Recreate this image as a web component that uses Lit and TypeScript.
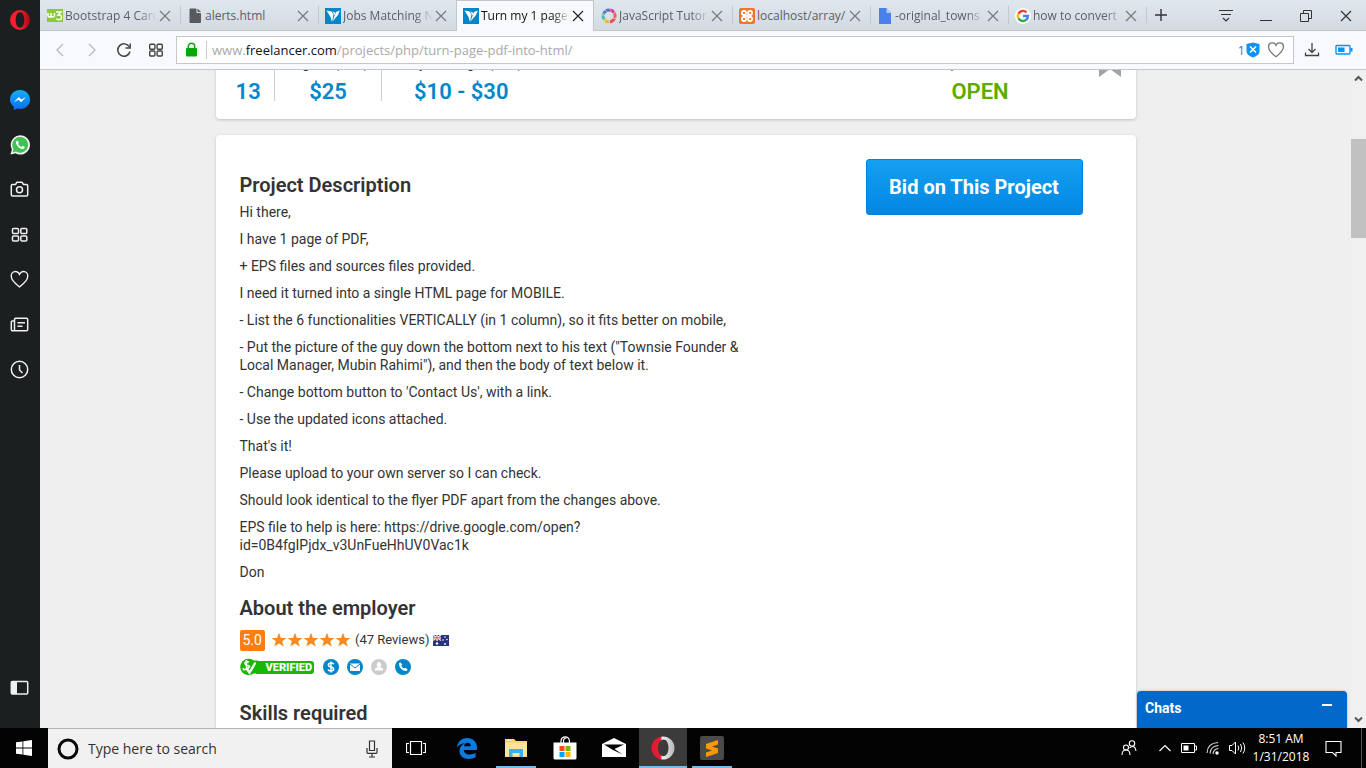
import { LitElement, html, css, svg } from "lit";
import { customElement } from "lit/decorators.js";
import { classMap } from "lit/directives/class-map.js";

const svgIcon = (w: number, h: number, body: unknown) =>
  html`<svg width=${w} height=${h} viewBox="0 0 ${w} ${h}" aria-hidden="true">${body}</svg>`;

const w3 = svgIcon(16, 16, svg`<rect y="1" width="16" height="13" fill="#8bc83c"/><path d="M1 5v2.500q0 1.500 1.500 1.500T4 7.500V5v2.500q0 1.500 1.500 1.500T7.500 7.500V5M9 4h5l-2.800 3q3.300-.2 3.300 2.300t-2.600 2.500q-2 0-2.700-1.300" fill="none" stroke="#fff" stroke-width="1.500"/>`);
const fileGrey = svgIcon(16, 16, svg`<path d="M3 1h6v4.500h4.500V14.500H3z" fill="#585b5e" stroke="#585b5e" stroke-linejoin="round"/><path d="M10.500.5v3.500H14z" fill="#585b5e"/>`);
const bird = svgIcon(16, 16, svg`<rect width="16" height="16" fill="#0087cb"/><path d="M1.500 2.500 6.500 3.500 8.500 6.500 7 14 5.500 9z" fill="#fff"/><path d="M7.500 3.300 10.500 5 9.300 7.500z" fill="#fff"/><path d="M11 4 14.800 2.500 13 7 7.500 13.500 9.500 8z" fill="#fff"/>`);
const swirl = svgIcon(16, 16, svg`<g fill="none" stroke-width="3"><path d="M8 2a6 6 0 0 1 5 2.600" stroke="#c6398f"/><path d="M13 4.600a6 6 0 0 1 .5 5.800" stroke="#f0655a"/><path d="M13.500 10.400a6 6 0 0 1-5 3.500" stroke="#e8505b"/><path d="M8.500 14a6 6 0 0 1-5.500-3" stroke="#e9b93c"/><path d="M3 11a6 6 0 0 1 0-6" stroke="#3cc3b5"/><path d="M3 5a6 6 0 0 1 5-3" stroke="#5b6fc4"/></g><g stroke="#fff" stroke-width=".5" fill="none"><path d="M8 .5q2 1 2.500 3.500M14 3q0 2-2.500 3M15.500 10q-2 1-4 0M9 16q-1.500-2-.5-4M3 14q0-2 2-3M.5 7q1.500-1 4 1M3 2q2 0 3 2"/></g>`);
const xampp = svgIcon(16, 16, svg`<rect width="16" height="16" rx="2" fill="#ee7724"/><g fill="none" stroke="#fff" stroke-width="1.800"><rect x="3" y="3" width="4" height="4" rx="1.700"/><rect x="9" y="3" width="4" height="4" rx="1.700"/><rect x="3" y="9" width="4" height="4" rx="1.700"/><rect x="9" y="9" width="4" height="4" rx="1.700"/><path d="M6 8h4"/></g>`);
const docBlue = svgIcon(16, 16, svg`<path d="M2 0h7.500L14 5v11H2z" fill="#4a80ea"/><path d="M9.500 0 14 5H9.500z" fill="#b4cbf6"/>`);
const google = svgIcon(16, 16, svg`<circle cx="8" cy="8" r="8" fill="#fff"/><g fill="none" stroke-width="2.400"><path d="M3.500 5.600a5 5 0 0 1 8-1.200" stroke="#ea4335"/><path d="M3.500 10.400a5 5 0 0 1 0-4.800" stroke="#fbbc05"/><path d="M11.300 11.700a5 5 0 0 1-7.800-1.300" stroke="#34a853"/><path d="M8 8h5q0 2.300-1.700 3.700" stroke="#4285f4"/></g>`);
const cross = svgIcon(12, 12, svg`<path d="M1 1l10 10M11 1 1 11" stroke="currentColor" stroke-width="1.200" fill="none"/>`);

const gridIcon = svgIcon(16, 16, svg`<g fill="none" stroke="currentColor" stroke-width="1.400"><rect x="1.700" y="2.200" width="5.200" height="5" rx="1"/><rect x="9.100" y="2.200" width="5.200" height="5" rx="1"/><rect x="1.700" y="9" width="5.200" height="5" rx="1"/><rect x="9.100" y="9" width="5.200" height="5" rx="1"/></g>`);
const heartPath = svg`<path d="M10 17.500C4 12.800 1.800 10.300 1.800 7A4.200 4.200 0 0 1 10 5.200 4.200 4.200 0 0 1 18.200 7c0 3.300-2.200 5.800-8.200 10.500z" fill="none" stroke="currentColor" stroke-width="1.400" stroke-linejoin="round"/>`;
const operaMark = svgIcon(20, 20, svg`<defs><linearGradient id="og" x2="1" y2="0"><stop offset="0" stop-color="#ff1b2d"/><stop offset=".5" stop-color="#fa1e2e"/><stop offset="1" stop-color="#a80716"/></linearGradient></defs><path fill-rule="evenodd" d="M10 0a10 10 0 1 0 0 20 10 10 0 0 0 0-20zm0 2.300c2.700 0 4.300 3.400 4.300 7.700S12.700 17.700 10 17.700 5.700 14.300 5.700 10 7.300 2.300 10 2.300z" fill="url(#og)"/>`);

const sideItems = [
  { name: "Messenger", icon: svgIcon(20, 20, svg`<defs><linearGradient id="mg" x2="0" y2="1"><stop offset="0" stop-color="#12b0f8"/><stop offset="1" stop-color="#0a6cf5"/></linearGradient></defs><path d="M10 0C4.400 0 0 4.200 0 9.500c0 3 1.500 5.500 3.800 7.200V20l3.500-1.400c.9.200 1.800.4 2.700.4 5.600 0 10-4.200 10-9.500S15.600 0 10 0z" fill="url(#mg)"/><path d="M3.800 12.200 8.800 7l2.600 2.500L16 7l-4.900 5.200L8.500 9.700z" fill="#fff"/>`) },
  { name: "WhatsApp", icon: svgIcon(20, 20, svg`<path d="M.5 19.500 1.900 14.500A9.600 9.600 0 1 1 5.500 18.200z" fill="#f4f4f4"/><path d="M2.500 17.500l1-3.500A7.900 7.900 0 1 1 6 16.500z" fill="#3fc154"/><path d="M7.300 5.500c-1.300.4-1.700 1.900-1 3.400 1.200 2.700 3.200 4.500 5.800 5.100 1.300.3 2.600-.6 2.700-2l-2.200-1.200-1.100 1.200c-1.600-.7-2.700-1.700-3.400-3l.8-1.200z" fill="#fff"/>`) },
  { name: "Snapshot", icon: svgIcon(20, 20, svg`<g fill="none" stroke="currentColor" stroke-width="1.500" stroke-linejoin="round"><path d="M2.500 4.500h3L7 2.200h5l1.500 2.300h3q1.200 0 1.200 1.200v9q0 1.200-1.200 1.200h-14q-1.200 0-1.200-1.200v-9Q1.300 4.500 2.500 4.500z"/><circle cx="9.500" cy="9.800" r="3"/></g>`) },
  { name: "Speed Dial", icon: svgIcon(20, 20, svg`<g fill="none" stroke="currentColor" stroke-width="1.500"><rect x="2.500" y="3.500" width="6" height="5" rx="1"/><rect x="10.800" y="3.500" width="6" height="5" rx="1"/><rect x="2.500" y="11" width="6" height="5" rx="1"/><rect x="10.800" y="11" width="6" height="5" rx="1"/></g>`) },
  { name: "Bookmarks", icon: svgIcon(20, 20, svg`<g transform="translate(-.5 -.5)">${heartPath}</g>`) },
  { name: "News", icon: svgIcon(20, 20, svg`<g transform="translate(-.5 -.5)" fill="none" stroke="currentColor" stroke-width="1.500" stroke-linejoin="round"><path d="M5 16.300V5q0-1.200 1.200-1.200H17q1.200 0 1.200 1.200v10q0 1.300-1.200 1.300H3.200q-1.400 0-1.400-1.300V7.500q0-1 1-1H5M8 8.200h7.500M8 11.800h5"/></g>`) },
  { name: "History", icon: svgIcon(20, 20, svg`<g transform="translate(-.5 -.5)" fill="none" stroke="currentColor" stroke-width="1.500"><circle cx="10" cy="10" r="8.200"/><path d="M10 5.500v5l3 3"/></g>`) },
];
const panelIcon = svgIcon(20, 20, svg`<g transform="translate(-.5 -.5)"><rect x="1.800" y="4" width="16.400" height="12.500" rx="1" fill="none" stroke="currentColor" stroke-width="1.500"/><path d="M2 4h5.500v12.500H2z" fill="currentColor"/></g>`);

const tabs = [
  { title: "Bootstrap 4 Card", icon: w3 },
  { title: "alerts.html", icon: fileGrey },
  { title: "Jobs Matching N", icon: bird },
  { title: "Turn my 1 page", icon: bird, active: true },
  { title: "JavaScript Tutor", icon: swirl },
  { title: "localhost/array/", icon: xampp },
  { title: "-original_towns", icon: docBlue },
  { title: "how to convert", icon: google },
];

const description = [
  "Hi there,",
  "I have 1 page of PDF,",
  "+ EPS files and sources files provided.",
  "I need it turned into a single HTML page for MOBILE.",
  "- List the 6 functionalities VERTICALLY (in 1 column), so it fits better on mobile,",
  "- Put the picture of the guy down the bottom next to his text (\"Townsie Founder & Local Manager, Mubin Rahimi\"), and then the body of text below it.",
  "- Change bottom button to 'Contact Us', with a link.",
  "- Use the updated icons attached.",
  "That's it!",
  "Please upload to your own server so I can check.",
  "Should look identical to the flyer PDF apart from the changes above.",
  "EPS file to help is here: https://drive.google.com/open?id=0B4fgIPjdx_v3UnFueHhUV0Vac1k",
  "Don",
];

@customElement("side-bar")
class SideBar extends LitElement {
  static styles = css`
    :host { display: flex; flex-direction: column; align-items: center; background: #1b1f20; padding: 10px 0 30px; box-sizing: border-box; }
    button { all: unset; display: flex; justify-content: center; width: 40px; height: 20px; color: #f0f0f0; }
    svg { display: block; }
    nav { display: flex; flex-direction: column; gap: 25px; margin-top: 60px; flex: 1; }
  `;
  render() {
    return html`
      <button aria-label="Opera menu">${operaMark}</button>
      <nav>${sideItems.map((i) => html`<button aria-label=${i.name}>${i.icon}</button>`)}</nav>
      <button aria-label="Toggle sidebar">${panelIcon}</button>
    `;
  }
}

@customElement("tab-strip")
class TabStrip extends LitElement {
  static styles = css`
    :host { display: flex; height: 31px; padding-left: 2px; box-sizing: border-box; background: linear-gradient(#e0e7ef, #d3d9e0); box-shadow: inset 0 -1px #c3c7ca; font: 12px/16px "Open Sans", "Noto Sans", sans-serif; color: #5c5f62; }
    svg { display: block; flex: none; }
    .tab { display: flex; flex: 0 1 138px; min-width: 0; box-sizing: border-box; align-items: center; padding: 0 9px 0 6px; border-left: 1px solid transparent; }
    .tab:first-child { padding-left: 4px; }
    .tab.divided { border-image: linear-gradient(transparent 7px, #c3c8cc 7px, #c3c8cc 23px, transparent 23px) 1; border-width: 0 0 0 1px; border-style: solid; }
    .tab.active { background: #f7f9fc; color: #111; border: 1px solid #c3c7ca; border-bottom: 0; }
    .title { flex: 1; margin: 0 2px; white-space: nowrap; overflow: hidden; }
    .fade { -webkit-mask: linear-gradient(90deg, #000 80%, transparent); mask: linear-gradient(90deg, #000 80%, transparent); }
    button { all: unset; display: grid; place-items: center; color: #77797b; }
    .active button { color: #222; }
    .add { width: 27px; color: #333; border-left: 1px solid #c3c8cc; height: 16px; margin-top: 7px; }
    .window { display: flex; margin-left: auto; }
    .window button { width: 40px; color: #333; }
  `;
  render() {
    return html`
      ${tabs.map((t, i) => html`
        <div class=${classMap({ tab: true, active: !!t.active, divided: i > 0 && i !== 3 && i !== 4 })}>
          ${t.icon}<span class=${classMap({ title: true, fade: i !== 1 && i !== 5 })}>${t.title}</span><button aria-label="Close tab">${cross}</button>
        </div>`)}
      <button class="add" aria-label="New tab">${svgIcon(12, 12, svg`<path d="M6 0v12M0 6h12" stroke="currentColor" stroke-width="1.400"/>`)}</button>
      <div class="window">
        <button aria-label="Tab menu">${svgIcon(14, 14, svg`<path d="M0 1.500h14M2 5.500h10M4 9l3 3 3-3" fill="none" stroke="currentColor" stroke-width="1.200"/>`)}</button>
        <button aria-label="Minimize">${svgIcon(12, 12, svg`<path d="M0 10.500h12" stroke="currentColor"/>`)}</button>
        <button aria-label="Restore">${svgIcon(12, 12, svg`<path d="M.5 3.500h8v8h-8zM3.500 3.500v-3h8v8h-3" fill="none" stroke="currentColor"/>`)}</button>
        <button aria-label="Close">${cross}</button>
      </div>
    `;
  }
}

@customElement("address-bar")
class AddressBar extends LitElement {
  static styles = css`
    :host { display: flex; align-items: center; height: 39px; box-sizing: border-box; background: #f7f9fc; border-bottom: 1px solid #c3c7ca; padding: 0 6px 0 4px; font: 13px/18px "Open Sans", "Noto Sans", sans-serif; }
    svg { display: block; }
    button { all: unset; display: grid; place-items: center; width: 32px; height: 28px; color: #444; }
    .off { color: #b9bcbf; }
    .field { flex: 1; display: flex; align-items: center; height: 28px; box-sizing: border-box; border: 1px solid #c3c7ca; background: #fff; margin: 0 2px 0 4px; padding: 0 5px 0 8px; }
    .url { flex: 1; border-left: 1px solid #ccc; margin-left: 8px; padding-left: 5px; color: #a9a9a9; }
    .url b { font-weight: 400; color: #111; }
    .count { color: #2a7de1; }
    .field button { width: 24px; color: #777; }
    .field .shield { width: 15px; margin-right: 4px; }
  `;
  render() {
    return html`
      <button class="off" aria-label="Back">${svgIcon(14, 14, svg`<path d="M10 1 4 7l6 6" fill="none" stroke="currentColor" stroke-width="1.400"/>`)}</button>
      <button class="off" aria-label="Forward">${svgIcon(14, 14, svg`<path d="M4 1l6 6-6 6" fill="none" stroke="currentColor" stroke-width="1.400"/>`)}</button>
      <button aria-label="Reload">${svgIcon(16, 16, svg`<path d="M13.400 5A6.200 6.200 0 1 0 14 9.500" fill="none" stroke="currentColor" stroke-width="1.500"/><path d="M14.200 1.500V6H9.500" fill="none" stroke="currentColor" stroke-width="1.500"/>`)}</button>
      <button aria-label="Speed Dial">${gridIcon}</button>
      <div class="field">
        ${svgIcon(13, 16, svg`<rect x="1" y="6" width="11" height="8.500" rx="1" fill="#07a807"/><path d="M3.300 7V4.500a3.200 3.200 0 0 1 6.400 0V7" fill="none" stroke="#07a807" stroke-width="1.500"/>`)}
        <span class="url">www.<b>freelancer.com</b>/projects/php/turn-page-pdf-into-html/</span>
        <span class="count">1</span>
        <button class="shield" aria-label="Ad blocker">${svgIcon(14, 16, svg`<path d="M.5 2 7 .5 13.500 2v7.500q0 3.500-6.500 6-6.500-2.500-6.500-6z" fill="#0a93fb"/><path d="M4 4.500l6 6M10 4.500l-6 6" stroke="#fff" stroke-width="1.600"/>`)}</button>
        <button aria-label="Bookmark">${svgIcon(18, 18, svg`<g transform="scale(.9)">${heartPath}</g>`)}</button>
      </div>
      <button aria-label="Downloads">${svgIcon(16, 16, svg`<path d="M8 1v9M4.500 7 8 10.500 11.500 7M1.500 10.500V13.500h13v-3" fill="none" stroke="currentColor" stroke-width="1.300"/>`)}</button>
      <button aria-label="Battery saver">${svgIcon(18, 12, svg`<rect x="1" y="1.500" width="14" height="8.500" rx="1" fill="none" stroke="#0a93fb" stroke-width="1.400"/><path d="M3 3.500h6.500V8H3zM15.500 4H17.500v3.500h-2z" fill="#0a93fb"/>`)}</button>
    `;
  }
}

@customElement("project-page")
class ProjectPage extends LitElement {
  static styles = css`
    :host { display: flex; position: relative; overflow: hidden; background: #efefef; font: 14px/18px Roboto, sans-serif; color: #333; min-height: 0; }
    svg { display: block; flex: none; }
    .scroll { flex: 1; overflow: hidden; padding-right: 40px; }
    .card { width: min(920px, 100%); box-sizing: border-box; margin: 0 auto 16px; background: #fff; border-radius: 4px; box-shadow: 0 1px 3px rgba(0, 0, 0, .2); }
    .summary { display: flex; margin-top: -36px; height: 85px; padding: 20px 15px 0 7px; }
    .stat { height: 47px; text-align: center; padding: 0 13px; border-left: 1px solid #ccc; font-size: 13px; line-height: 20px; }
    .stat:first-child { border: 0; }
    .stat strong { display: block; font-size: 22px; font-weight: 600; line-height: 26px; margin-top: 5px; color: #0087cb; }
    .stat a { color: #0087cb; text-decoration: none; }
    .budget { padding: 0 18px; }
    .status { border: 0; margin-left: auto; color: #5dab00; padding-right: 64px; }
    .status strong { color: #5dab00; }
    .project { display: flex; justify-content: space-between; align-items: flex-start; padding: 24px 53px 60px 24px; }
    .text { width: 510px; }
    h2 { font-size: 20px; line-height: 24px; font-weight: 600; margin: 15px 0 6px; }
    .text h2:first-child { margin-top: 14px; }
    p { margin: 0 0 9px; overflow-wrap: break-word; }
    .bid { all: unset; box-sizing: border-box; width: 217px; height: 56px; text-align: center; border: 1px solid #0081dc; border-radius: 3px; background: linear-gradient(#159ff0, #0287e3); color: #fff; font-size: 20px; font-weight: 700; }
    .row { display: flex; align-items: center; height: 22px; margin-top: 9px; }
    .score { background: #fb7e14; color: #fff; border-radius: 2px; padding: 2px 3px; line-height: 17px; margin-right: 6px; }
    .reviews { font-size: 13px; margin: 0 4px; }
    .badges { gap: 8px; margin-top: 5px; }
    .verified { display: flex; align-items: center; margin-right: 1px; }
    .verified span { height: 13px; font-size: 11px; line-height: 13px; font-weight: 900; color: #fff; background: #16b800; border-radius: 0 3px 3px 0; padding: 0 2px 0 10px; margin-left: -2px; }
    .skills { margin-top: 23px; }
    .bar { width: 15px; background: #f0f0f0; display: flex; flex-direction: column; align-items: center; padding: 4px 0; box-sizing: border-box; }
    .thumb { width: 15px; height: 99px; background: #c1c1c1; margin: 56px 0 auto; }
    .chat { all: unset; position: absolute; right: 19px; bottom: 0; width: 210px; height: 37px; box-sizing: border-box; padding: 0 15px 3px 8px; border-radius: 4px 4px 0 0; background: #0269cb; color: #fff; font-weight: 700; display: flex; align-items: center; justify-content: space-between; box-shadow: 0 0 3px rgba(0, 0, 0, .25); }
  `;
  render() {
    const star = svg`<path d="M8 .8 10 6h5.500l-4.400 3.300 1.700 5.300L8 11.400l-4.800 3.200 1.700-5.300L.5 6H6z" fill="#fb8a1c"/>`;
    return html`
      <main class="scroll">
        <section class="card summary">
          <div class="stat">Bids<strong>13</strong></div>
          <div class="stat">Avg Bid (<a href="#usd">USD</a>)<strong>$25</strong></div>
          <div class="stat budget">Project Budget (<a href="#usd">USD</a>)<strong>$10 - $30</strong></div>
          <div class="stat status">6 days, 9 hours left<strong>OPEN</strong></div>
          ${svgIcon(22, 23, svg`<path d="M0 0h22v23L11 15 0 23z" fill="#a3a3a3"/>`)}
        </section>
        <section class="card project">
          <div class="text">
            <h2>Project Description</h2>
            ${description.map((d) => html`<p>${d}</p>`)}
            <h2>About the employer</h2>
            <div class="row">
              <span class="score">5.0</span>
              ${[0, 1, 2, 3, 4].map(() => svgIcon(16, 16, star))}
              <span class="reviews">(47 Reviews)</span>
              ${svgIcon(16, 11, svg`<rect width="16" height="11" fill="#26347a"/><path d="M0 0l8 5.500M8 0 0 5.500" stroke="#e9dfe8" stroke-width="1.300"/><path d="M4 0v6M0 2.800h8" stroke="#fff" stroke-width="2"/><path d="M4 0v6M0 2.800h8" stroke="#e8474c"/><g fill="#fff"><circle cx="4" cy="8.500" r="1.200"/><circle cx="12" cy="2" r=".8"/><circle cx="10" cy="5" r=".8"/><circle cx="14" cy="4.500" r=".8"/><circle cx="12" cy="9" r=".9"/></g>`)}
            </div>
            <div class="row badges">
              <span class="verified">${svgIcon(18, 18, svg`<circle cx="8.500" cy="9" r="8.300" fill="#16b800"/><path d="M12 2.500h6v13h-6z" fill="#16b800"/><path d="M9 4q-3.500-1-4 .8T8 7.500t-1 3.200T3.500 10M6.500 2v10" fill="none" stroke="#fff" stroke-width="1.600"/><path d="M7 11l2.500 3.500L15.500 4.500" fill="none" stroke="#fff" stroke-width="2.400"/>`)}<span>VERIFIED</span></span>
              ${svgIcon(16, 16, svg`<circle cx="8" cy="8" r="8" fill="#0087cb"/><path d="M10.800 5.300Q10.300 4 8 4 5.400 4 5.400 5.900q0 1.500 2.600 2t2.700 2.200Q10.700 12 8 12q-2.500 0-2.900-1.600M8 2.500v11" fill="none" stroke="#fff" stroke-width="1.500"/>`)}
              ${svgIcon(16, 16, svg`<circle cx="8" cy="8" r="8" fill="#0087cb"/><path d="M3 4.500h10v7.500H3z" fill="#fff"/><path d="M3 5 8 9l5-4" fill="none" stroke="#0087cb"/>`)}
              ${svgIcon(16, 16, svg`<circle cx="8" cy="8" r="8" fill="#ccc"/><path d="M5.800 5.500a2.200 2.500 0 0 1 4.400 0q0 1.700-1 2.500l2.800 1.500v2H4v-2L6.800 8q-1-.8-1-2.500z" fill="#fff"/>`)}
              ${svgIcon(16, 16, svg`<circle cx="8" cy="8" r="8" fill="#0087cb"/><path d="M5.200 3.200 4 4.400q-.3 3 2 5.300t5.500 2.200l1.200-1.200-2.200-2-1.300.9Q7 8.800 6.300 6.700l1-1.200z" fill="#fff"/>`)}
            </div>
            <h2 class="skills">Skills required</h2>
          </div>
          <button class="bid">Bid on This Project</button>
        </section>
      </main>
      <div class="bar">
        ${svgIcon(9, 9, svg`<path d="M1 6.500 4.500 3 8 6.500" fill="none" stroke="#555" stroke-width="2"/>`)}
        <div class="thumb"></div>
        ${svgIcon(9, 9, svg`<path d="M1 2.500 4.500 6 8 2.500" fill="none" stroke="#555" stroke-width="2"/>`)}
      </div>
      <button class="chat">Chats${svgIcon(10, 10, svg`<path d="M0 2h10" stroke="#fff" stroke-width="2"/>`)}</button>
    `;
  }
}

const apps = [
  { name: "Task View", cls: "view", icon: svgIcon(20, 16, svg`<path d="M4.500 1.500h11v13h-11zM3 3.500H.5v9H3M17 3.500h2.500v9H17" fill="none" stroke="#fff" stroke-width="1.200"/>`) },
  { name: "Edge", cls: "", icon: svgIcon(22, 22, svg`<path d="M1 10.500C1.800 4.500 5.500 1 11 1c6 0 10 4 10 9.500V13H7.800c.2 3 2.500 4.500 5.800 4.500 2.500 0 4.500-.7 6-1.700v4.500Q16.800 22 12.800 22C7 22 3.500 18.700 3.500 14c0-3.500 2-6.200 5.500-7.700C4.800 6.500 2.200 8.500 1 10.500zm7-1.200h6.800c0-2.300-1-3.500-3.200-3.500-2 0-3.200 1.500-3.600 3.500z" fill="#0b7ade"/>`) },
  { name: "File Explorer", cls: "run", icon: svgIcon(22, 20, svg`<path d="M0 1h9l2 2h11v16H0z" fill="#f7d774"/><path d="M0 5h22v13H0z" fill="#ffe59a"/><path d="M2 2h4" stroke="#fff3c7"/><path d="M4 11h14v8h-3.500v-4h-7v4H4z" fill="#37b2ea"/>`) },
  { name: "Store", cls: "", icon: svgIcon(24, 24, svg`<path d="M8 7V5a4.200 4.200 0 0 1 8.400 0v2M10.500 7V5a3 3 0 0 1 3-3" fill="none" stroke="#fff" stroke-width="1.200"/><path d="M.5 6.500h23V22q0 1.500-1.500 1.500H2Q.5 23.500.5 22z" fill="#fff"/><path d="M6.500 10h5v5h-5z" fill="#f25022"/><path d="M12.500 10h5v5h-5z" fill="#7fba00"/><path d="M6.500 16h5v5h-5z" fill="#00a4ef"/><path d="M12.500 16h5v5h-5z" fill="#ffb900"/>`) },
  { name: "Mail", cls: "", icon: svgIcon(24, 20, svg`<path d="M0 6 12 0l12 6v13H0z" fill="#fff"/><path d="M2 6.500h20L12.500 11l8 5.500L11 12z" fill="#000"/>`) },
  { name: "Opera", cls: "run on", icon: svgIcon(24, 24, svg`<defs><linearGradient id="sg" x2="1"><stop offset=".38" stop-color="#e01b33"/><stop offset=".48" stop-color="#f0f0f0"/><stop offset="1" stop-color="#b5b5b5"/></linearGradient></defs><path fill-rule="evenodd" d="M12 .5a11.500 11.500 0 1 0 0 23 11.500 11.500 0 0 0 0-23zm.5 3c3 0 5 3.500 5 8.200s-2 8.500-5 8.500-5.500-3.500-5.500-8.200 2.500-8.500 5.500-8.500z" fill="url(#sg)"/>`) },
  { name: "Sublime Text", cls: "run", icon: svgIcon(24, 24, svg`<rect width="24" height="24" rx="2" fill="#4a4a4a"/><path d="M18 4v4.500l-6 2 6 2v4.500L6 21v-4.500l6-2-6-2V8z" fill="#ff9800"/>`) },
];

@customElement("task-bar")
class TaskBar extends LitElement {
  static styles = css`
    :host { display: flex; height: 40px; background: #030303; color: #fff; font: 12px/18px "Open Sans", "Noto Sans", sans-serif; }
    svg { display: block; flex: none; }
    button { all: unset; display: grid; place-items: center; box-sizing: border-box; height: 40px; width: 48px; }
    .search { display: flex; align-items: center; width: 344px; box-sizing: border-box; background: #f1f1f1; border-top: 1px solid #b5b5b5; padding: 0 14px 0 8px; color: #333; }
    input { all: unset; flex: 1; min-width: 0; margin-left: 8px; font-size: 14px; line-height: 20px; }
    input::placeholder { color: #333; opacity: 1; }
    .apps { display: flex; gap: 1px; }
    .view { margin-right: 2px; }
    .run { background: linear-gradient(#76b9ed, #76b9ed) bottom / 40px 2px no-repeat; }
    .on { background-color: #3b3b3b; background-size: 100% 2px; }
    .tray { display: flex; align-items: center; margin-left: auto; }
    .tray button { width: 24px; }
    .tray .people { width: 48px; }
    .tray .note { width: 40px; }
    time { text-align: center; width: 64px; }
    .peek { width: 4px; height: 40px; margin-left: 8px; border-left: 1px solid #555; }
  `;
  render() {
    return html`
      <button aria-label="Start">${svgIcon(16, 16, svg`<path d="M0 2.300 6.500 1.400v6.200H0zM7.300 1.300 16 0v7.600H7.300zM0 8.400h6.500v6.200L0 13.700zM7.300 8.400H16V16l-8.700-1.300z" fill="#fff"/>`)}</button>
      <label class="search">
        ${svgIcon(24, 24, svg`<circle cx="12" cy="12" r="9" fill="none" stroke="#0a0a0a" stroke-width="3"/>`)}
        <input type="text" placeholder="Type here to search" aria-label="Type here to search">
        ${svgIcon(12, 18, svg`<path d="M3.500 1h5v9.500h-5zM1 8v4.500q0 .8.800.8h8.400q.8 0 .8-.8V8M6 13.500V17M3 17h6" fill="none" stroke="#333" stroke-width="1.200"/>`)}
      </label>
      <div class="apps">${apps.map((a) => html`<button class=${a.cls} aria-label=${a.name}>${a.icon}</button>`)}</div>
      <div class="tray">
        <button class="people" aria-label="People">${svgIcon(16, 16, svg`<g fill="none" stroke="#fff" stroke-width="1.100"><circle cx="5" cy="7.500" r="2.500"/><path d="M1 15q0-5 4-5t4 5"/><circle cx="11" cy="3.500" r="2.700"/><path d="M8.500 8q5.500-4 6.500 3"/></g>`)}</button>
        <button aria-label="Hidden icons">${svgIcon(12, 8, svg`<path d="M.5 7 6 1.500 11.500 7" fill="none" stroke="#fff" stroke-width="1.200"/>`)}</button>
        <button aria-label="Battery">${svgIcon(16, 12, svg`<path d="M.5 1.500h13v9H.5zM14 4h1.500v4H14" fill="none" stroke="#fff"/><path d="M2.500 3.500h5v5h-5z" fill="#fff"/>`)}</button>
        <button aria-label="Network">${svgIcon(14, 14, svg`<g fill="none" stroke="#ddd" stroke-width="1.100"><path d="M1 12Q1.500 2 12 1.500M4 12.500Q4.500 5 12.500 4.500M7 13q.5-5 5.500-5.500"/></g><circle cx="11" cy="12" r="1.700" fill="#fff"/>`)}</button>
        <button aria-label="Volume">${svgIcon(17, 14, svg`<path d="M.5 4.500h2.500L6.500 1v12L3 9.500H.5zM9 4.500q1.500 2.500 0 5M11.500 3q2.500 4 0 8M14 1.500q3.500 5.500 0 11" fill="none" stroke="#fff"/>`)}</button>
        <time>8:51 AM<br>1/31/2018</time>
        <button class="note" aria-label="Notifications">${svgIcon(17, 17, svg`<path d="M1 1.500h15v11h-5V16L7.500 12.500H1z" fill="none" stroke="#fff" stroke-width="1.100"/>`)}</button>
        <span class="peek"></span>
      </div>
    `;
  }
}

@customElement("app-root")
class AppRoot extends LitElement {
  static styles = css`
    :host { display: grid; grid-template: minmax(0, 1fr) auto / 40px minmax(0, 1fr); height: 100vh; overflow: hidden; }
    .browser { display: grid; grid-template-rows: auto auto minmax(0, 1fr); min-width: 0; min-height: 0; }
    .taskbar { grid-column: 1 / -1; }
  `;
  render() {
    return html`
      <side-bar></side-bar>
      <div class="browser">
        <tab-strip></tab-strip>
        <address-bar></address-bar>
        <project-page></project-page>
      </div>
      <task-bar class="taskbar"></task-bar>
    `;
  }
}
